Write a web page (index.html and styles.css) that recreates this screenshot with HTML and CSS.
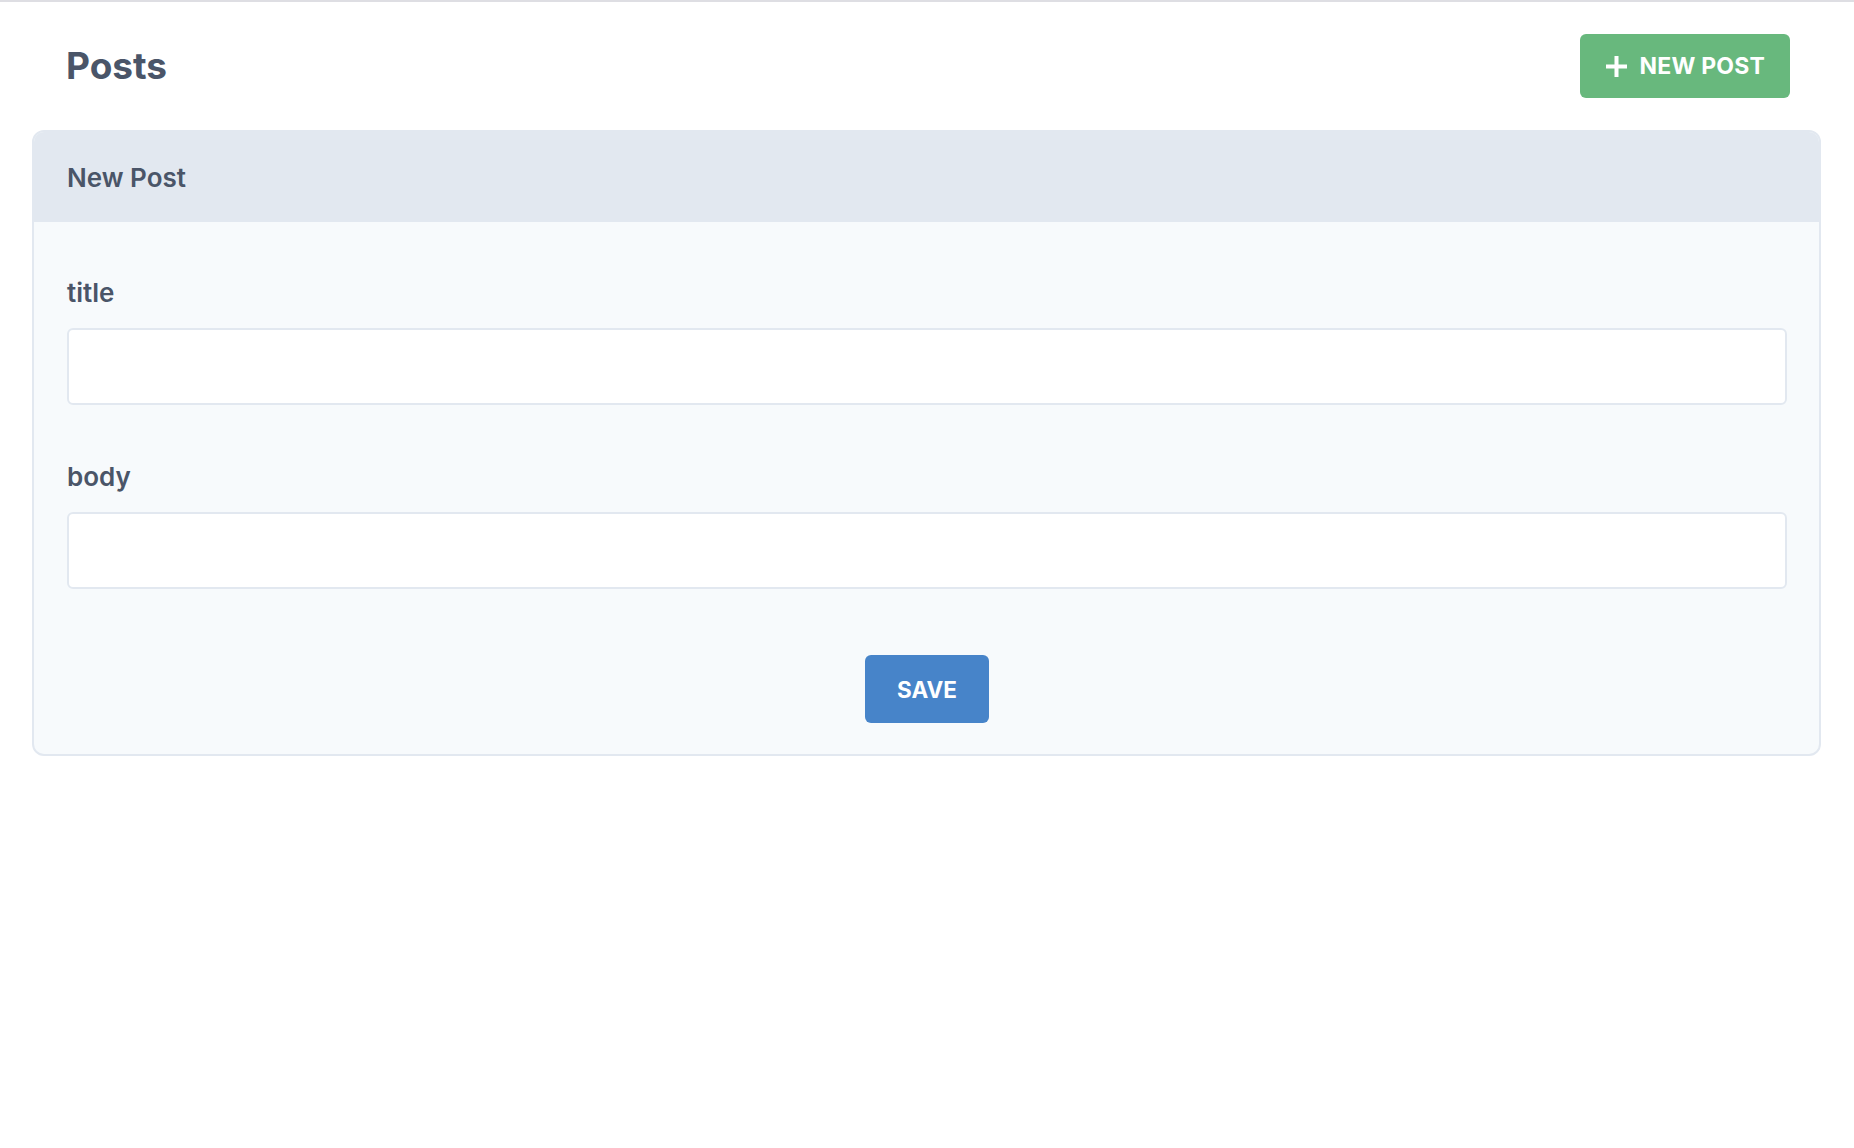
FILE: index.html
```html
<!DOCTYPE html>
<html lang="en">
<head>
    <meta charset="UTF-8">
    <meta name="viewport" content="width=device-width, initial-scale=1.0">
    <title>Posts</title>
    <link rel="stylesheet" href="styles.css">
</head>
<body>
    <div class="container">
        <div class="page-header">
            <h1>Posts</h1>
            <a href="#" class="new-btn">
                <svg class="plus" viewBox="0 0 22 22" width="21" height="21" aria-hidden="true">
                    <path d="M11 0v22M0 11h22" stroke="#fff" stroke-width="4.2" fill="none"/>
                </svg>
                NEW POST
            </a>
        </div>

        <div class="card">
            <div class="card-header">New Post</div>
            <form class="card-body" action="#" method="post">
                <div class="field">
                    <label for="title">title</label>
                    <input type="text" name="title" id="title">
                </div>
                <div class="field">
                    <label for="body">body</label>
                    <input type="text" name="body" id="body">
                </div>
                <div class="actions">
                    <button type="submit" class="save-btn">SAVE</button>
                </div>
            </form>
        </div>
    </div>
</body>
</html>
```

FILE: styles.css
```css
body {
    font-family: Inter, "Noto Sans", Arial, sans-serif;
    margin: 0;
    padding: 0;
    background-color: #fff;
    color: #4a5568;
    border-top: 2px solid #dedee3;
}
.container {
    padding: 0 33px 0 32px;
}
.page-header {
    display: flex;
    align-items: center;
    justify-content: space-between;
    padding: 32px 31px 32px 34px;
}
h1 {
    margin: 0;
    font-size: 37px;
    font-weight: 700;
    line-height: 64px;
    color: #4a5568;
}
.new-btn {
    display: flex;
    align-items: center;
    height: 64px;
    box-sizing: border-box;
    padding: 0 25px 0 26px;
    background-color: #68b87d;
    color: #fff;
    text-decoration: none;
    border-radius: 6px;
    font-size: 23px;
    font-weight: 700;
    letter-spacing: 0.2px;
}
.plus {
    margin-right: 13px;
}
.card {
    border: 2px solid #e2e8f0;
    border-radius: 12px;
    background-color: #f7fafc;
    overflow: hidden;
}
.card-header {
    background-color: #e2e8f0;
    padding: 26px 33px 25px;
    font-size: 26px;
    font-weight: 600;
    line-height: 39px;
}
.card-body {
    display: flex;
    flex-direction: column;
    gap: 52px;
    padding: 51px 32px 31px 33px;
}
.field label {
    display: block;
    font-size: 26px;
    font-weight: 600;
    line-height: 39px;
    margin-bottom: 16px;
}
.field input {
    display: block;
    box-sizing: border-box;
    width: 100%;
    height: 77px;
    border: 2px solid #e2e8f0;
    border-radius: 6px;
    background-color: #fff;
    font-size: 24px;
    padding: 0 16px;
    outline: none;
}
.actions {
    display: flex;
    justify-content: center;
    margin-top: 14px;
}
.save-btn {
    height: 68px;
    padding: 0 32px;
    background-color: #4784c9;
    color: #fff;
    border: none;
    border-radius: 6px;
    font-family: inherit;
    font-size: 22.5px;
    font-weight: 700;
    cursor: pointer;
}
```
